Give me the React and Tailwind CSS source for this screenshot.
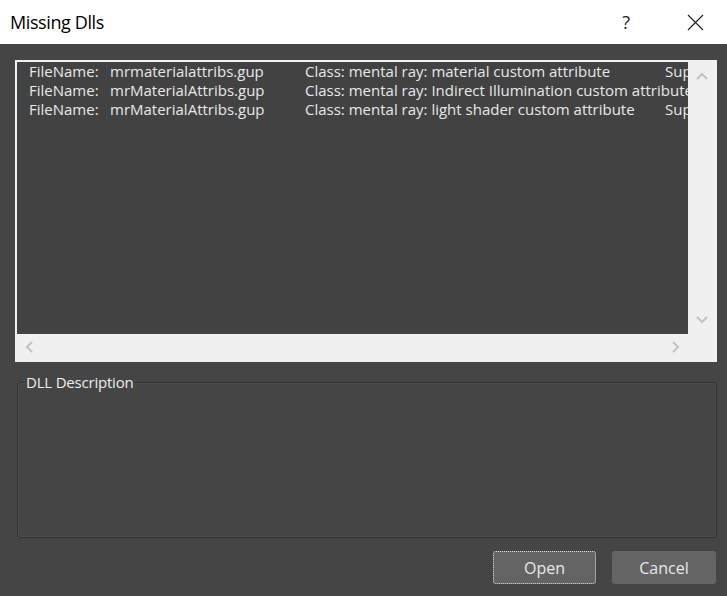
import React from 'react';

const rows = [
    { file: 'mrmaterialattribs.gup', cls: 'Class: mental ray: material custom attribute', sup: 'Sup' },
    { file: 'mrMaterialAttribs.gup', cls: 'Class: mental ray: Indirect Illumination custom attribute', sup: '' },
    { file: 'mrMaterialAttribs.gup', cls: 'Class: mental ray: light shader custom attribute', sup: 'Sup' },
];

function Chevron({ dir }) {
    const d = {
        up: 'M2 9 L7 4 L12 9',
        down: 'M2 5 L7 10 L12 5',
        left: 'M9 2 L4 7 L9 12',
        right: 'M5 2 L10 7 L5 12',
    }[dir];
    return (
        <svg width="14" height="14" viewBox="0 0 14 14" fill="none" stroke="#c2c2c2" strokeWidth="2">
            <path d={d} />
        </svg>
    );
}

export default function App() {
    return (
        <div className="w-[727px] h-[596px] flex flex-col bg-[#454545] overflow-hidden" style={{ fontFamily: '"Open Sans", "Noto Sans", sans-serif' }}>
            {/* title bar */}
            <div className="h-[44px] bg-white flex items-center shrink-0">
                <span className="ml-[10px] text-[18px] text-black tracking-[-0.4px]">Missing Dlls</span>
                <span className="ml-auto mr-[57px] text-[18px] text-[#222]">?</span>
                <svg className="mr-[23px]" width="17" height="17" viewBox="0 0 17 17" stroke="#222" strokeWidth="1.2">
                    <path d="M1 1 L16 16 M16 1 L1 16" />
                </svg>
            </div>

            <div className="flex flex-col px-[15px] pt-[16px]">
                {/* list box */}
                <div className="w-[702px] h-[302px] border-2 border-[#f0f0f0] bg-[#f0f0f0] flex flex-col">
                    <div className="flex h-[272px]">
                        <div className="w-[671px] bg-[#424242] overflow-hidden text-[15px] leading-[19px] text-[#e8e8e8]">
                            {rows.map((r, i) => (
                                <div key={i} className="flex whitespace-nowrap">
                                    <span className="w-[93px] shrink-0 pl-[12px]">FileName:</span>
                                    <span className="w-[195px] shrink-0">{r.file}</span>
                                    <span className="w-[360px] shrink-0 overflow-visible">{r.cls}</span>
                                    <span className="shrink-0">{r.sup}</span>
                                </div>
                            ))}
                        </div>
                        <div className="flex-1 flex flex-col items-center justify-between py-[8px]">
                            <Chevron dir="up" />
                            <Chevron dir="down" />
                        </div>
                    </div>
                    <div className="flex-1 flex items-center justify-between px-[6px] w-[671px]">
                        <Chevron dir="left" />
                        <Chevron dir="right" />
                    </div>
                </div>

                {/* description group */}
                <div className="relative mt-[20px] ml-[2px] w-[700px] h-[156px] border border-[#333] rounded-[3px] shadow-[inset_0_0_0_1px_#4d4d4d]">
                    <span className="absolute -top-[12px] left-[7px] px-[1px] bg-[#454545] text-[15px] text-[#ededed] leading-[22px] tracking-[-0.2px]">DLL Description</span>
                </div>

                {/* buttons */}
                <div className="flex justify-end gap-[16px] mt-[13px] w-[701px]">
                    <button className="w-[103px] h-[33px] bg-[#646464] rounded-[3px] border border-dotted border-[#e0e0e0] text-[16px] text-[#e8e8e8]">Open</button>
                    <button className="w-[104px] h-[33px] bg-[#646464] rounded-[3px] text-[16px] text-[#e8e8e8]">Cancel</button>
                </div>
            </div>
        </div>
    );
}
